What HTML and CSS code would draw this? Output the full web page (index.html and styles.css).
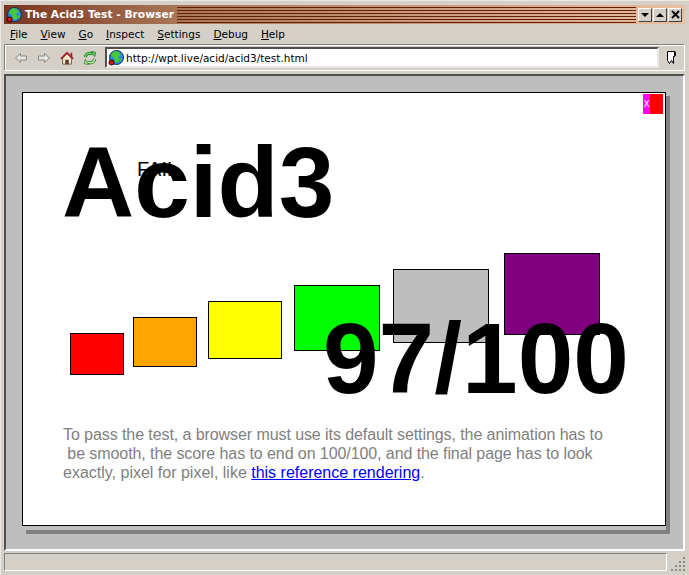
FILE: index.html
```html
<!DOCTYPE html>
<html lang="en">
<head>
    <meta charset="UTF-8">
    <title>The Acid3 Test - Browser</title>
    <link rel="stylesheet" href="styles.css">
</head>
<body>
    <div class="window">
        <div class="titlebar">
            <svg class="globe" width="16" height="16" viewBox="0 0 16 16">
                <circle cx="8.500" cy="7.500" r="7" fill="#2a86d8" stroke="#06304a"/>
                <path d="M4 3l3-2 4 1 2 3-3 2 2 3-2 3-3-1-1-4-3-2z M12 9l2-1v2l-1 2z" fill="#44c83c"/>
                <circle cx="3.500" cy="12.500" r="2.500" fill="#e01010" stroke="#200"/>
            </svg>
            <span class="title-text">The Acid3 Test - Browser</span>
            <div class="stripes"></div>
            <div class="winbtns">
                <button class="winbtn"><span class="arrow-down"></span></button>
                <button class="winbtn"><span class="arrow-up"></span></button>
                <button class="winbtn close">
                    <svg width="9" height="9" viewBox="0 0 9 9"><path d="M1 1l7 7M8 1L1 8" stroke="#000" stroke-width="2"/></svg>
                </button>
            </div>
        </div>
        <div class="menubar">
            <span><u>F</u>ile</span>
            <span><u>V</u>iew</span>
            <span><u>G</u>o</span>
            <span><u>I</u>nspect</span>
            <span><u>S</u>ettings</span>
            <span><u>D</u>ebug</span>
            <span><u>H</u>elp</span>
        </div>
        <div class="toolbar">
            <svg class="tool" width="14" height="14" viewBox="0 0 14 14"><path d="M6.500 2.500L1.500 7l5 4.500V9h6V5h-6z" fill="#e4e4e0" stroke="#8a8a86"/></svg>
            <svg class="tool" width="14" height="14" viewBox="0 0 14 14"><path d="M7.500 2.500l5 4.500-5 4.500V9h-6V5h6z" fill="#e4e4e0" stroke="#8a8a86"/></svg>
            <svg class="tool" width="14" height="16" viewBox="0 0 16 16">
                <path d="M3 8v7h10V8L8 3z" fill="#f2e6c8" stroke="#6a5040"/>
                <path d="M1 9l7-7 7 7" fill="none" stroke="#a8202a" stroke-width="2"/>
                <path d="M12 2h2v5h-2z" fill="#a8202a"/>
                <path d="M6 10h4v5H6z" fill="#5a3a2a"/>
            </svg>
            <svg class="tool" width="14" height="16" viewBox="0 0 16 16">
                <path d="M2.500 7A5.500 5.500 0 0 1 11 3.500" fill="none" stroke="#1c6c1c" stroke-width="3.400"/>
                <path d="M13.500 9A5.500 5.500 0 0 1 5 12.500" fill="none" stroke="#1c6c1c" stroke-width="3.400"/>
                <path d="M2.500 7A5.500 5.500 0 0 1 11 3.500" fill="none" stroke="#58d858" stroke-width="1.800"/>
                <path d="M13.500 9A5.500 5.500 0 0 1 5 12.500" fill="none" stroke="#b8f0a8" stroke-width="1.800"/>
                <path d="M9.500 .5l5 1-1 5z" fill="#58d858" stroke="#1c6c1c" stroke-width=".8"/>
                <path d="M6.500 15.500l-5-1 1-5z" fill="#b8f0a8" stroke="#1c6c1c" stroke-width=".8"/>
            </svg>
            <div class="urlbar">
                <svg width="16" height="16" viewBox="0 0 16 16">
                    <circle cx="8.500" cy="7.500" r="7" fill="#2a86d8" stroke="#06304a"/>
                    <path d="M4 3l3-2 4 1 2 3-3 2 2 3-2 3-3-1-1-4-3-2z M12 9l2-1v2l-1 2z" fill="#44c83c"/>
                    <circle cx="3.500" cy="12.500" r="2.500" fill="#e01010" stroke="#200"/>
                </svg>
                <span>http://wpt.live/acid/acid3/test.html</span>
            </div>
            <svg class="bookmark" width="11" height="15" viewBox="0 0 11 15"><path d="M1.500 1.500h7v5h-1v7l-2-3-2 3-2-3z M8.500 1.500q1 0 1 1v3l-1 1" fill="#fff" stroke="#000" stroke-width="1"/></svg>
        </div>
        <div class="viewport">
            <div class="page">
                <div class="errors"><span class="x">X</span></div>
                <div class="heading">
                    <h1>Acid3</h1>
                    <span class="fail">FAIL</span>
                </div>
                <div class="stage">
                    <div class="bucket b1"></div>
                    <div class="bucket b2"></div>
                    <div class="bucket b3"></div>
                    <div class="bucket b4"></div>
                    <div class="bucket b5"></div>
                    <div class="bucket b6"></div>
                    <div class="score">97/100</div>
                </div>
                <p class="note">To pass the test, a browser must use its default settings, the animation has to<br>
                &nbsp;be smooth, the score has to end on 100/100, and the final page has to look<br>
                <span class="last-line">exactly, pixel for pixel, like <a href="#">this reference rendering</a>.</span></p>
            </div>
        </div>
        <div class="statusbar">
            <div class="status-main"></div>
            <svg class="grip" width="15" height="15" viewBox="0 0 15 15">
                <path d="M13 1h2v2h-2zM13 5h2v2h-2zM9 5h2v2H9zM13 9h2v2h-2zM9 9h2v2H9zM5 9h2v2H5zM13 13h2v2h-2zM9 13h2v2H9zM5 13h2v2H5zM1 13h2v2H1z" fill="#8a8a86"/>
            </svg>
        </div>
    </div>
</body>
</html>
```

FILE: styles.css
```css
html, body{
    margin: 0;
    padding: 0;
    height: 100%;
    overflow: hidden;
}
.window{
    width: 689px;
    height: 575px;
    box-sizing: border-box;
    padding: 4px 4px 4px 3px;
    background-color: #d4d0c8;
    border-top: 1px solid #ece9e2;
    border-left: 1px solid #ece9e2;
    display: flex;
    flex-direction: column;
    font-family: "DejaVu Sans", sans-serif;
    font-size: 10.5px;
    color: #000;
}
.titlebar{
    height: 19px;
    flex: none;
    display: flex;
    align-items: center;
    background: linear-gradient(to right, #7a3420, #a87858 26%, #e8c0a0 100%);
}
.globe{
    margin: 0 3px 0 2px;
    flex: none;
}
.title-text{
    color: #fff;
    font-weight: bold;
    font-size: 10.7px;
    white-space: nowrap;
    padding-right: 3px;
}
.stripes{
    flex: 1;
    height: 16px;
    background: repeating-linear-gradient(to bottom, #661e08 0, #661e08 1px, transparent 1px, transparent 3px);
}
.winbtns{
    display: flex;
    gap: 1px;
    padding: 0 3px 0 2px;
}
.winbtn{
    width: 14px;
    height: 14px;
    padding: 0;
    display: flex;
    align-items: center;
    justify-content: center;
    background-color: #d4d0c8;
    border: 1px solid;
    border-color: #fff #404040 #404040 #fff;
}
.arrow-down{
    border-left: 4px solid transparent;
    border-right: 4px solid transparent;
    border-top: 4px solid #000;
}
.arrow-up{
    border-left: 4px solid transparent;
    border-right: 4px solid transparent;
    border-bottom: 4px solid #000;
}
.menubar{
    height: 20px;
    flex: none;
    display: flex;
    align-items: center;
    gap: 13px;
    padding-left: 6px;
}
.toolbar{
    height: 27px;
    flex: none;
    display: flex;
    align-items: center;
    border: 1px solid;
    border-color: #808080 #fff #fff #808080;
    box-shadow: inset 1px 1px 0 #fff;
    box-sizing: border-box;
    margin-bottom: 3px;
}
.tool{
    flex: none;
    margin-left: 9px;
}
.urlbar{
    flex: 1;
    height: 21px;
    box-sizing: border-box;
    margin-left: 8px;
    display: flex;
    align-items: center;
    gap: 2px;
    padding-left: 1px;
    background-color: #fff;
    border: 2px solid;
    border-color: #505050 #e8e8e4 #e8e8e4 #505050;
}
.bookmark{
    flex: none;
    margin: 0 7px;
}
.viewport{
    flex: 1;
    min-height: 0;
    box-sizing: border-box;
    padding: 16px 17px 15px 16px;
    background-color: #bebebe;
    border: 2px solid;
    border-color: #505050 #fff #fff #505050;
}
.page{
    height: 434px;
    box-sizing: border-box;
    position: relative;
    padding: 1px;
    background-color: #fff;
    border: 1px solid #000;
}
/* the shadow is only a strip, with a gap under the page */
.page::after{
    content: "";
    position: absolute;
    left: 3px;
    top: 3px;
    right: -5px;
    bottom: -9px;
    border-right: 4px solid #808080;
    border-bottom: 4px solid #808080;
    box-sizing: border-box;
    pointer-events: none;
}
.errors{
    position: absolute;
    top: 1px;
    right: 2px;
    width: 20px;
    height: 20px;
    background-color: #f00;
}
.x{
    display: block;
    width: 7px;
    height: 20px;
    background-color: #f0f;
    color: #fff;
    font-size: 9px;
    line-height: 20px;
    text-align: center;
}
.heading{
    position: relative;
    height: 120px;
    padding-left: 38px;
}
h1{
    position: relative;
    z-index: 1;
    margin: 0;
    font-family: "Liberation Sans", sans-serif;
    font-size: 100px;
    line-height: 120px;
    font-weight: bold;
    padding-top: 28px;
}
.fail{
    position: absolute;
    left: 113px;
    top: 64px;
    font-family: "Liberation Sans", sans-serif;
    font-size: 20px;
}
.stage{
    position: relative;
    height: 290px;
}
.bucket{
    position: absolute;
    box-sizing: border-box;
    border: 1px solid #000;
}
.b1{ left: 46px; top: 119px; width: 54px; height: 42px; background-color: #f00; }
.b2{ left: 109px; top: 103px; width: 64px; height: 50px; background-color: #ffa500; }
.b3{ left: 184px; top: 87px; width: 74px; height: 58px; background-color: #ff0; }
.b4{ left: 270px; top: 71px; width: 86px; height: 66px; background-color: #0f0; }
.b5{ left: 369px; top: 55px; width: 96px; height: 74px; background-color: #bebebe; }
.b6{ left: 480px; top: 39px; width: 96px; height: 82px; background-color: #800080; }
.score{
    position: absolute;
    left: 299px;
    top: 84px;
    font-family: "Liberation Sans", sans-serif;
    font-size: 100px;
    line-height: 120px;
    font-weight: bold;
}
.note{
    position: absolute;
    left: 40px;
    top: 332px;
    margin: 0;
    font-family: "Liberation Sans", sans-serif;
    font-size: 16px;
    line-height: 19px;
    letter-spacing: -0.08px;
    color: #808080;
    white-space: nowrap;
}
.last-line{
    letter-spacing: 0;
}
.note a{
    color: #00f;
}
.statusbar{
    flex: none;
    height: 20px;
    display: flex;
    align-items: flex-end;
    box-sizing: border-box;
}
.status-main{
    flex: 1;
    height: 18px;
    border: 1px solid;
    border-color: #808080 #fff #fff #808080;
    box-sizing: border-box;
}
.grip{
    flex: none;
    margin-left: 3px;
    width: 15px;
    height: 15px;
}
```
